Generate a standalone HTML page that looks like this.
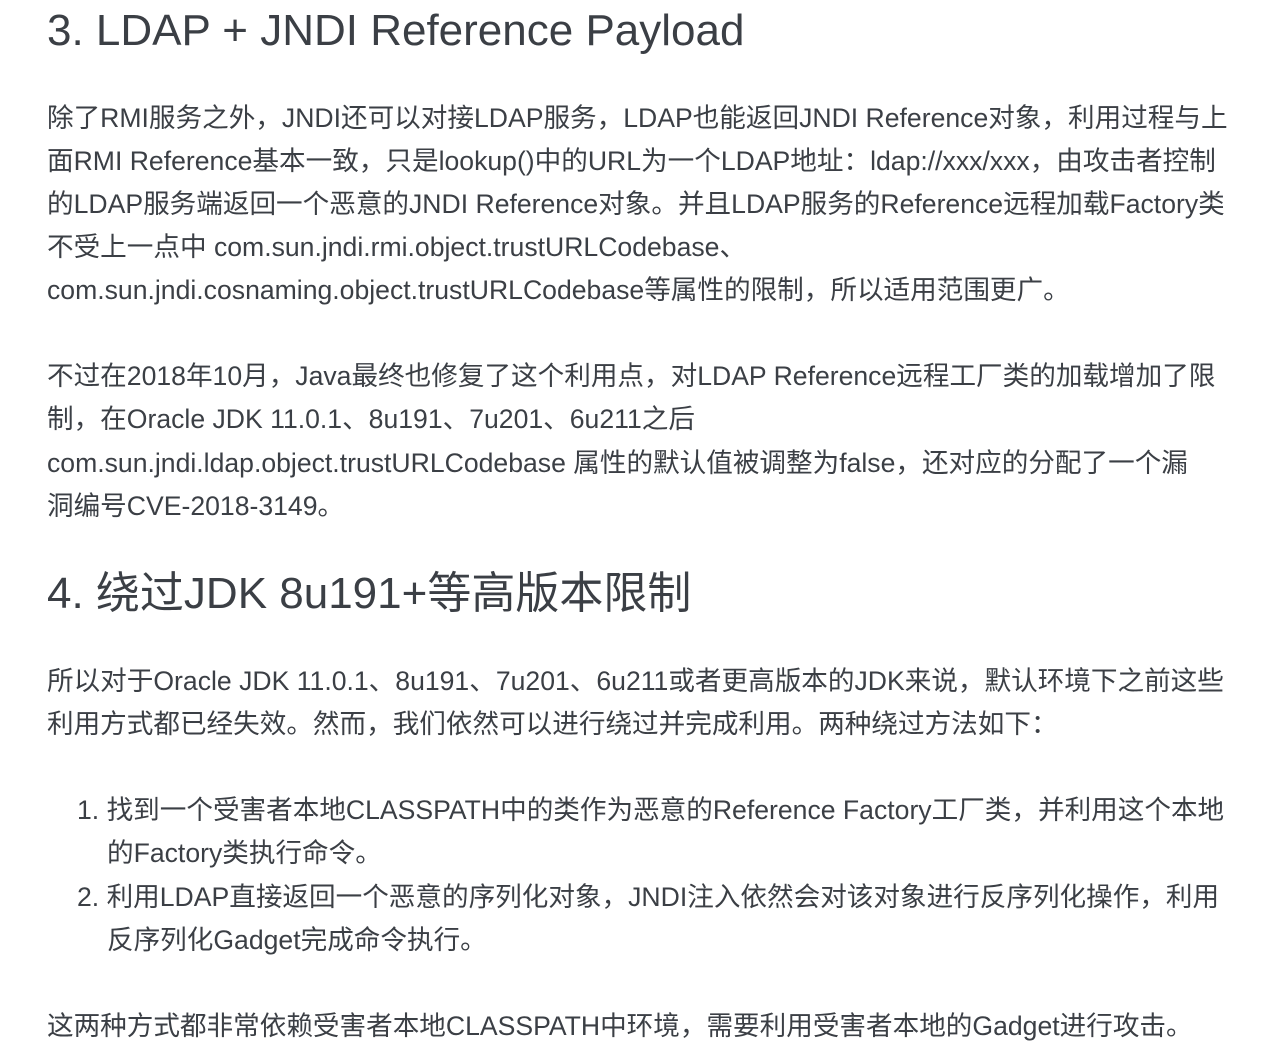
<!DOCTYPE html>
<html><head><meta charset="utf-8"><style>
body{margin:0;background:#fff;width:1270px;height:1062px;overflow:hidden;color:#3b3f45;font-family:"Liberation Sans","Noto Sans CJK SC",sans-serif;}
.l{position:absolute;left:47px;white-space:nowrap;font-size:26.6px;line-height:43px;}
.h{position:absolute;left:47px;white-space:nowrap;font-size:44px;line-height:60px;}
</style></head><body>
<div class="h" style="top:1px">3. LDAP + JNDI Reference Payload</div>
<div class="l" style="top:97px">除了RMI服务之外，JNDI还可以对接LDAP服务，LDAP也能返回JNDI Reference对象，利用过程与上</div>
<div class="l" style="top:140px">面RMI Reference基本一致，只是lookup()中的URL为一个LDAP地址：ldap://xxx/xxx，由攻击者控制</div>
<div class="l" style="top:183px">的LDAP服务端返回一个恶意的JNDI Reference对象。并且LDAP服务的Reference远程加载Factory类</div>
<div class="l" style="top:226px">不受上一点中 com.sun.jndi.rmi.object.trustURLCodebase、</div>
<div class="l" style="top:269px">com.sun.jndi.cosnaming.object.trustURLCodebase等属性的限制，所以适用范围更广。</div>
<div class="l" style="top:355px">不过在2018年10月，Java最终也修复了这个利用点，对LDAP Reference远程工厂类的加载增加了限</div>
<div class="l" style="top:398px">制，在Oracle JDK 11.0.1、8u191、7u201、6u211之后</div>
<div class="l" style="top:442px">com.sun.jndi.ldap.object.trustURLCodebase 属性的默认值被调整为false，还对应的分配了一个漏</div>
<div class="l" style="top:485px">洞编号CVE-2018-3149。</div>
<div class="h" style="top:564px">4. 绕过JDK 8u191+等高版本限制</div>
<div class="l" style="top:660px">所以对于Oracle JDK 11.0.1、8u191、7u201、6u211或者更高版本的JDK来说，默认环境下之前这些</div>
<div class="l" style="top:703px">利用方式都已经失效。然而，我们依然可以进行绕过并完成利用。两种绕过方法如下：</div>
<div class="l" style="top:789px;left:77px">1. 找到一个受害者本地CLASSPATH中的类作为恶意的Reference Factory工厂类，并利用这个本地</div>
<div class="l" style="top:832px;left:107px">的Factory类执行命令。</div>
<div class="l" style="top:876px;left:77px">2. 利用LDAP直接返回一个恶意的序列化对象，JNDI注入依然会对该对象进行反序列化操作，利用</div>
<div class="l" style="top:919px;left:107px">反序列化Gadget完成命令执行。</div>
<div class="l" style="top:1005px">这两种方式都非常依赖受害者本地CLASSPATH中环境，需要利用受害者本地的Gadget进行攻击。</div>
</body></html>
